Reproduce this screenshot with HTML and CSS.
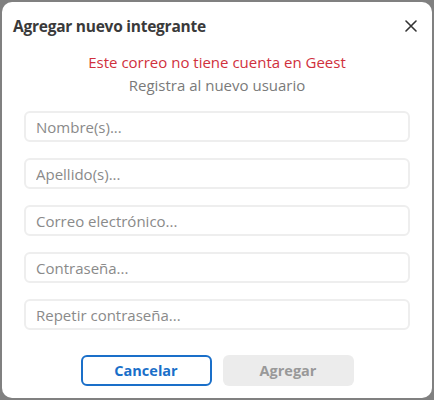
FILE: index.html
```html
<!DOCTYPE html>
<html lang="es">
<head>
<meta charset="utf-8">
<link rel="stylesheet" href="styles.css">
</head>
<body>
<div class="modal">
  <div class="header">
    <h1 class="title">Agregar nuevo integrante</h1>
    <button class="close" aria-label="Cerrar">
      <svg width="12" height="12" viewBox="0 0 12 12"><path d="M1 1L11 11M11 1L1 11" stroke="#333" stroke-width="1.6" stroke-linecap="round"/></svg>
    </button>
  </div>
  <p class="error">Este correo no tiene cuenta en Geest</p>
  <p class="sub">Registra al nuevo usuario</p>
  <form class="form">
    <input class="field" type="text" placeholder="Nombre(s)...">
    <input class="field" type="text" placeholder="Apellido(s)...">
    <input class="field" type="text" placeholder="Correo electrónico...">
    <input class="field" type="password" placeholder="Contraseña...">
    <input class="field" type="password" placeholder="Repetir contraseña...">
  </form>
  <div class="actions">
    <button class="btn btn-outline">Cancelar</button>
    <button class="btn btn-disabled">Agregar</button>
  </div>
</div>
</body>
</html>
```
FILE: styles.css
```css
* { box-sizing: border-box; }
html, body { margin: 0; padding: 0; }
body {
  background: #808080;
  width: 434px;
  height: 400px;
  padding: 2px;
  font-family: "Open Sans", "Liberation Sans", sans-serif;
}
.modal {
  background: #fff;
  width: 430px;
  height: 396px;
  border-radius: 10px;
  display: flex;
  flex-direction: column;
}
.header {
  display: flex;
  justify-content: space-between;
  align-items: center;
  padding: 13px 14px 0 11px;
}
.title {
  margin: 0;
  font-size: 15.5px;
  letter-spacing: -0.25px;
  font-weight: 700;
  color: #3a3a3a;
  line-height: 22px;
}
.close {
  border: 0;
  background: none;
  padding: 0;
  width: 14px;
  height: 14px;
  display: flex;
  align-items: center;
  justify-content: center;
}
.error {
  margin: 15px 0 0;
  text-align: center;
  color: #d0303c;
  font-size: 15px;
  line-height: 20px;
}
.sub {
  margin: 3px 0 0;
  text-align: center;
  color: #7a7a7a;
  font-size: 15px;
  line-height: 20px;
}
.form {
  display: flex;
  flex-direction: column;
  gap: 16px;
  padding: 0 22px;
  margin-top: 16px;
}
.field {
  width: 386px;
  height: 31px;
  border: 2px solid #eeeeee;
  border-radius: 6px;
  padding: 0 10px;
  font-family: inherit;
  font-size: 15px;
  color: #333;
  outline: none;
}
.field::placeholder { color: #8a8a8a; }
.actions {
  display: flex;
  justify-content: center;
  gap: 11px;
  margin-top: 25px;
}
.btn {
  width: 131px;
  height: 31px;
  border-radius: 6px;
  font-family: inherit;
  font-size: 14.5px;
  font-weight: 700;
}
.btn-outline {
  background: #fff;
  border: 2px solid #1a6fc9;
  color: #1a6fc9;
}
.btn-disabled {
  background: #ececec;
  border: 0;
  color: #999;
}
```
